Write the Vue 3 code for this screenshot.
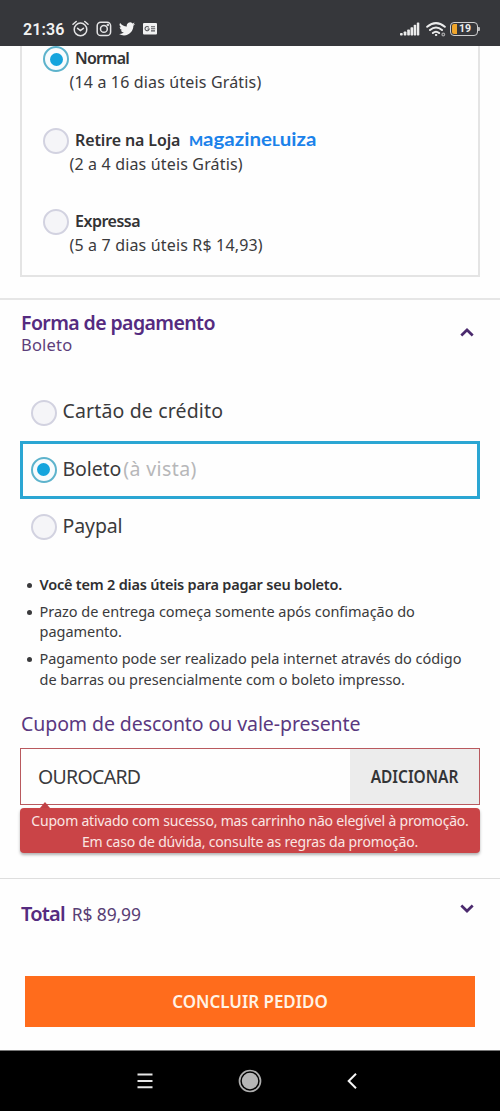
<script setup>
import { ref } from 'vue'

const shipping = ref('normal')
const payment = ref('boleto')

const shippingOptions = [
  { id: 'normal', title: 'Normal', detail: '(14 a 16 dias úteis Grátis)' },
  { id: 'retire', title: 'Retire na Loja', detail: '(2 a 4 dias úteis Grátis)', brand: true },
  { id: 'expressa', title: 'Expressa', detail: '(5 a 7 dias úteis R$ 14,93)' }
]
const paymentOptions = [
  { id: 'cartao', label: 'Cartão de crédito' },
  { id: 'boleto', label: 'Boleto', note: '(à vista)' },
  { id: 'paypal', label: 'Paypal' }
]
</script>

<template>
  <div class="phone">
    <header class="status">
      <span class="time">21:36</span>
      <svg class="alarm" width="17" height="18" viewBox="0 0 17 18" fill="none" stroke="#e4e4e5" stroke-width="1.5" stroke-linecap="round">
        <circle cx="8.5" cy="9.4" r="6.3" />
        <path d="M1 4.2 4.2 1.5M16 4.2 12.8 1.5M5.6 8.3 8.4 10.6 11.4 8.3" />
      </svg>
      <svg class="insta" width="16" height="16" viewBox="0 0 16 16" fill="none" stroke="#e4e4e5" stroke-width="1.5">
        <rect x="1.2" y="1.2" width="13.4" height="13.4" rx="3.6" />
        <circle cx="7.9" cy="7.9" r="3.4" />
        <circle cx="11.8" cy="4.1" r=".5" />
      </svg>
      <svg class="bird" width="16" height="14" viewBox="0 0 24 20" fill="#f3f3f3">
        <path d="M24 2.400a9.800 9.800 0 0 1-2.800.8A5 5 0 0 0 23.300.4a9.900 9.900 0 0 1-3.100 1.200 4.900 4.900 0 0 0-8.400 4.500A14 14 0 0 1 1.700.9a4.900 4.900 0 0 0 1.500 6.600 4.900 4.900 0 0 1-2.200-.6 4.900 4.900 0 0 0 3.900 4.900 5 5 0 0 1-2.200.1 4.900 4.900 0 0 0 4.600 3.400A9.900 9.900 0 0 1 0 17.400a14 14 0 0 0 7.500 2.200c9.100 0 14.300-7.700 14-14.600A10 10 0 0 0 24 2.400z" />
      </svg>
      <svg class="news" width="14" height="12" viewBox="0 0 14 12" fill="none">
        <rect width="14" height="11.500" rx="1" fill="#f1f1f1" />
        <path d="M5.800 4.400A2.100 2.100 0 1 0 6.200 6H4.400M8 3.700h4M8 5.800h4.200M8 7.900h4" stroke="#55565a" stroke-width="1.100" />
      </svg>
      <span class="spacer"></span>
      <svg class="signal" width="20" height="14" viewBox="0 0 20 14" fill="#ececec">
        <rect x="0" y="11" width="2.700" height="2.500" rx=".7" />
        <rect x="3.700" y="9.500" width="2.700" height="4" rx=".7" />
        <rect x="7.200" y="7.500" width="2.700" height="6" rx=".7" />
        <rect x="10.500" y="5.200" width="2.700" height="8.300" rx=".7" />
        <rect x="13.700" y="2.800" width="2.500" height="10.700" rx=".7" />
        <rect x="16.800" y=".4" width="2.500" height="13.100" rx=".7" />
      </svg>
      <svg class="wifi" width="20" height="15" viewBox="0 0 20 15" fill="none" stroke="#ececec" stroke-width="2" stroke-linecap="round">
        <path d="M1.200 4.800Q10-2.500 18.800 4.800M4 8Q10 3 16 8M6.900 11Q10 8.400 13.100 11" />
        <circle cx="10" cy="13" r=".7" fill="#ececec" stroke-width="1" />
        <circle cx="17.300" cy="12.500" r="1.300" stroke="#a4a4a6" stroke-width="1.300" />
      </svg>
      <span class="battery"><i class="charge"></i><b>19</b></span>
    </header>

    <main>
      <section class="shipping">
        <label v-for="o in shippingOptions" :key="o.id" class="ship">
          <span class="radio" :class="{ on: shipping === o.id }" @click="shipping = o.id"></span>
          <span class="ship-text">
            <span class="ship-title"><strong :class="o.id">{{ o.title }}</strong><span v-if="o.brand" class="brand"><small>M</small>agazine<small>L</small>uiza</span></span>
            <span class="ship-detail">{{ o.detail }}</span>
          </span>
        </label>
      </section>

      <section class="payment">
        <div class="pay-head">
          <div>
            <h2>Forma de pagamento</h2>
            <p class="chosen">Boleto</p>
          </div>
          <svg class="chev" width="14" height="9" viewBox="0 0 14 9"><path d="M1.300 7.500 7 2l5.700 5.500" /></svg>
        </div>
        <div class="methods">
          <label v-for="o in paymentOptions" :key="o.id" class="method" :class="{ active: payment === o.id }">
            <span class="radio" :class="{ on: payment === o.id }" @click="payment = o.id"></span>
            <span class="method-name" :class="o.id">{{ o.label }}</span>
            <span v-if="o.note" class="note">{{ o.note }}</span>
          </label>
        </div>
        <ul class="rules">
          <li class="bold">Você tem 2 dias úteis para pagar seu boleto.</li>
          <li>Prazo de entrega começa somente após confimação do<br>pagamento.</li>
          <li>Pagamento pode ser realizado pela internet através do código<br>de barras ou presencialmente com o boleto impresso.</li>
        </ul>
        <h3>Cupom de desconto ou vale-presente</h3>
        <div class="coupon">
          <div class="code">OUROCARD</div>
          <button class="add"><span>ADICIONAR</span></button>
        </div>
        <div class="error">
          <span class="l1">Cupom ativado com sucesso, mas carrinho não elegível à promoção.</span>
          <span class="l2">Em caso de dúvida, consulte as regras da promoção.</span>
        </div>
      </section>

      <section class="total">
        <p><strong>Total</strong><span>R$ 89,99</span></p>
        <svg class="chev" width="14" height="9" viewBox="0 0 14 9"><path d="M1.300 1.500 7 7l5.700-5.500" /></svg>
      </section>

      <button class="submit"><span>CONCLUIR PEDIDO</span></button>
    </main>

    <nav class="nav">
      <svg width="16" height="16" viewBox="0 0 16 16" stroke="#e6e6e6" stroke-width="2"><path d="M.5 1.500h15M.5 8h15M.5 14.200h15" /></svg>
      <svg width="24" height="24" viewBox="0 0 24 24"><circle cx="12" cy="12" r="10.500" fill="none" stroke="#aeaeae" stroke-width="1.700" /><circle cx="12" cy="12" r="8.200" fill="#b6b6b6" /></svg>
      <svg width="10" height="16" viewBox="0 0 10 16" fill="none" stroke="#f5f5f5" stroke-width="2"><path d="M9 .8 1.700 8 9 15.200" /></svg>
    </nav>
  </div>
</template>

<style>
body { margin: 0; background: #fefefe; }
</style>

<style scoped>
.phone {
  width: 500px;
  height: 1111px;
  display: flex;
  flex-direction: column;
  overflow: hidden;
  background: #fefefe;
  color: #3a3a3c;
  font-family: "Noto Sans", "Open Sans", sans-serif;
  white-space: nowrap;
}
h2, h3, p, ul { margin: 0; padding: 0; }
button { border: 0; padding: 0; font-family: inherit; }
svg { display: block; flex: none; }

.status {
  box-sizing: border-box;
  height: 46px;
  flex: none;
  display: flex;
  align-items: center;
  padding: 12px 22px 0 23px;
  background: #36373b;
}
.time { width: 42px; padding-top: 2px; font: 600 16px/18px Roboto, sans-serif; letter-spacing: .1px; color: #f2f2f2; }
.alarm { margin-left: 7px; }
.insta { margin-left: 7px; }
.bird { margin-left: 7px; }
.news { margin-left: 8px; }
.spacer { flex: 1; }
.signal { margin-right: 6px; }
.wifi { margin-right: 4px; }
.battery {
  position: relative;
  box-sizing: border-box;
  width: 28px;
  height: 14px;
  display: flex;
  align-items: center;
  border: 1.5px solid #cfcfd0;
  border-radius: 4px;
}
.battery::after {
  content: "";
  position: absolute;
  right: -3px;
  top: 4px;
  width: 2px;
  height: 4px;
  background: #b9b9ba;
  border-radius: 0 1px 1px 0;
}
.charge { width: 5px; height: 10px; margin-left: 1px; background: #f0a62c; border-radius: 2px 0 0 2px; }
.battery b { margin-left: 2px; font: 700 10.5px/10px Roboto, sans-serif; color: #eee; }

main { height: 1004px; flex: none; display: flex; flex-direction: column; }

.radio {
  box-sizing: border-box;
  flex: none;
  width: 26px;
  height: 26px;
  display: flex;
  align-items: center;
  justify-content: center;
  border: 2px solid #d2d2e0;
  border-radius: 50%;
  background: #f5f5f8;
}
.radio.on { border-color: #5db3cc; background: #f7fbfd; }
.radio.on::before { content: ""; width: 13px; height: 13px; border-radius: 50%; background: #13a4dd; }

.shipping {
  box-sizing: border-box;
  height: 231px;
  margin: 0 20px;
  padding-left: 21px;
  border: 2px solid #e4e4e4;
  border-top: 0;
}
.ship { display: flex; height: 81.5px; }
.ship-text { display: flex; flex-direction: column; margin-left: 6px; }
.ship-title { display: flex; height: 24px; line-height: 24px; }
.ship-title strong { font-size: 16px; font-weight: 600; letter-spacing: -.12px; color: #333335; }
.ship-title .normal { letter-spacing: -.8px; }
.ship-title .expressa { letter-spacing: -.5px; }
.brand {
  margin-left: 9px;
  font-family: Lato, "Noto Sans", sans-serif;
  font-weight: 700;
  font-size: 18px;
  line-height: 22px;
  color: #1b82ea;
  transform: scaleX(1.14);
  transform-origin: left;
}
.brand small { font-size: 13px; font-weight: 900; }
.ship-detail { margin-left: -5.5px; font-size: 16px; line-height: 25px; letter-spacing: .16px; }

.payment { margin-top: 21px; padding: 11px 20px 0; border-top: 2px solid #e6e6e6; }
.pay-head { display: flex; justify-content: space-between; height: 73px; padding-left: 1px; }
h2 { font-size: 19.5px; line-height: 24px; font-weight: 600; letter-spacing: -.6px; color: #552b80; }
.chosen { font-size: 16.5px; line-height: 20px; letter-spacing: .2px; color: #5d3f7b; }
.chev { margin: 17px 6px 0 0; fill: none; stroke: #4b2a6e; stroke-width: 2.7; }

.methods { padding-bottom: 1px; }
.method {
  box-sizing: border-box;
  display: flex;
  align-items: center;
  height: 57.3px;
  padding-left: 7.5px;
  border: 3px solid transparent;
  font-size: 19.5px;
  line-height: 28px;
}
.method.active { border-color: #2ba6d3; }
.method-name { margin: 0 0 2.5px 6px; letter-spacing: .15px; }
.method-name.boleto, .method-name.paypal { letter-spacing: -.1px; }
.note { margin: 0 0 2.5px 2px; letter-spacing: .4px; color: #b7b7b9; }

.rules { margin: 17px 0 0 19.5px; list-style: none; font-size: 14.5px; line-height: 20.4px; letter-spacing: -.03px; }
.rules li { position: relative; margin-bottom: 6.5px; }
.rules li::before {
  content: "";
  position: absolute;
  left: -12.5px;
  top: 9px;
  width: 5px;
  height: 5px;
  border-radius: 50%;
  background: #3a3a3c;
}
.rules .bold { font-weight: 600; letter-spacing: -.21px; color: #2f2f31; }

h3 { margin: 22.1px 0 0 1px; font-size: 19.5px; line-height: 26px; font-weight: 400; letter-spacing: -.08px; color: #5a3880; }

.coupon {
  box-sizing: border-box;
  display: flex;
  height: 57px;
  margin-top: 11px;
  border: 1.5px solid #b9595e;
}
.code { flex: 1; padding-left: 17px; font-size: 19.5px; line-height: 55px; letter-spacing: -.7px; }
.add { width: 129px; background: #ececec; color: #333436; }
.add span { display: block; font-size: 18.5px; line-height: 51px; padding-bottom: 2px; font-weight: 600; transform: scaleX(.835); }

.error {
  position: relative;
  display: flex;
  flex-direction: column;
  align-items: center;
  height: 43.5px;
  margin-top: 3px;
  padding-top: 1.5px;
  border-radius: 4px;
  background: #ca4447;
  box-shadow: 0 2px 3px rgba(0, 0, 0, .3);
  color: #fae6e3;
  font-size: 14px;
  line-height: 21px;
}
.error::before {
  content: "";
  position: absolute;
  left: 20px;
  top: -6px;
  border: solid transparent;
  border-width: 0 5.5px 6px;
  border-bottom-color: #c24146;
}
.l1 { letter-spacing: -.2px; }
.l2 { letter-spacing: -.16px; }

.total {
  display: flex;
  justify-content: space-between;
  margin-top: 25px;
  padding: 22px 20px 0 21px;
  border-top: 1px solid #dedede;
  color: #5a3880;
}
.total p { display: flex; align-items: baseline; line-height: 26px; }
.total strong { font-size: 20px; font-weight: 600; letter-spacing: -.8px; color: #552b80; }
.total p span { margin-left: 7px; font-size: 17.5px; letter-spacing: -.15px; color: #583f75; }
.total .chev { margin-top: 3px; }

.submit { height: 51px; margin: 49px 25px 0; background: #ff6c1c; color: #fff3e6; }
.submit span { display: block; font-size: 18.5px; line-height: 49px; padding-bottom: 2px; font-weight: 600; transform: scaleX(.915); }

.nav {
  box-sizing: border-box;
  height: 61px;
  flex: none;
  display: flex;
  align-items: center;
  justify-content: center;
  gap: 85px;
  padding-right: 6px;
  border-top: 1px solid #777;
  background: #000;
}
</style>
